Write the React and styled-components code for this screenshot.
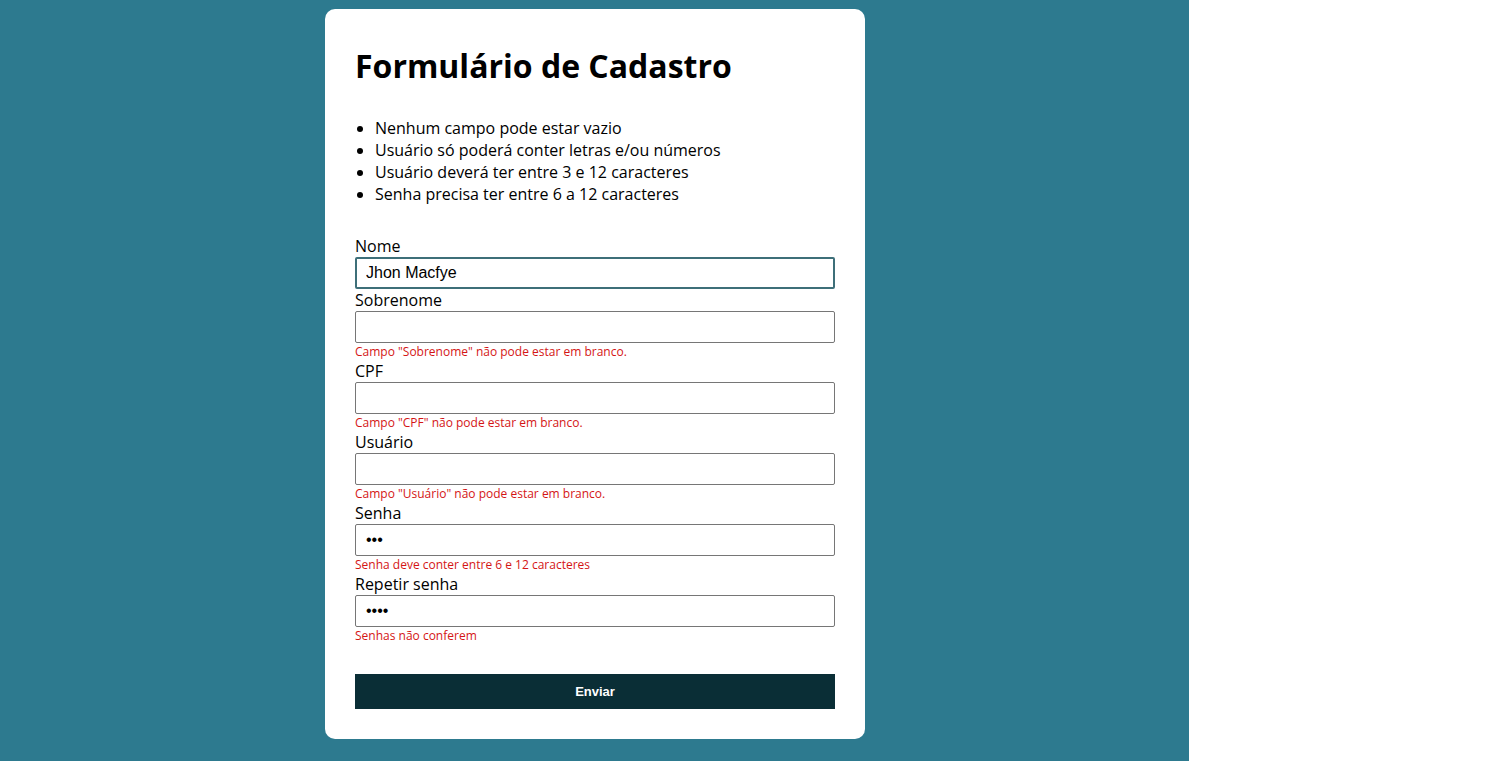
import { Fragment } from "react";
import styled, { createGlobalStyle } from "styled-components";

const GlobalStyle = createGlobalStyle`
  html, body {
    margin: 0;
    padding: 0;
    background: #ffffff;
  }
  * {
    box-sizing: border-box;
  }
`;

const Page = styled.div`
  width: 1189px;
  min-height: 761px;
  background-color: #2d7a8f;
  padding-top: 9px;
  padding-left: 325px;
  font-family: "Open Sans", "Liberation Sans", sans-serif;
`;

const Card = styled.div`
  width: 540px;
  background: #ffffff;
  border-radius: 10px;
  padding: 30px;
`;

const Title = styled.h1`
  font-size: 32px;
  font-weight: 700;
  color: #000;
  margin: 5px 0 0;
  line-height: 44px;
`;

const Rules = styled.ul`
  margin: 29px 0 0;
  padding-left: 20px;
  font-size: 16px;
  line-height: 22px;
  color: #000;
`;

const Form = styled.form`
  display: flex;
  flex-direction: column;
  margin-top: 30px;
`;

const Label = styled.label`
  font-size: 16px;
  line-height: 22px;
  color: #000;
`;

const Input = styled.input`
  width: 480px;
  height: 32px;
  padding: 0 10px;
  font-family: "Liberation Sans", Arial, sans-serif;
  font-size: 16px;
  color: #000;
  border: 1px solid #767676;
  border-radius: 2px;
  background: #fff;
  outline: none;
  caret-color: #000;

  &:focus {
    border: 2px solid #3e6f79;
    padding: 0 9px;
  }
`;

const ErrorText = styled.span`
  font-size: 12px;
  line-height: 16px;
  color: #d41515;
  margin-top: 1px;
`;

const Submit = styled.button`
  margin-top: 30px;
  width: 480px;
  height: 35px;
  border: none;
  background: #0a2e36;
  color: #ffffff;
  font-family: "Liberation Sans", Arial, sans-serif;
  font-weight: 700;
  font-size: 13px;
  cursor: pointer;
`;

const fields = [
  { label: "Nome", value: "Jhon Macfye", focus: true },
  { label: "Sobrenome", error: 'Campo "Sobrenome" não pode estar em branco.' },
  { label: "CPF", error: 'Campo "CPF" não pode estar em branco.' },
  { label: "Usuário", error: 'Campo "Usuário" não pode estar em branco.' },
  { label: "Senha", type: "password", value: "abc", error: "Senha deve conter entre 6 e 12 caracteres" },
  { label: "Repetir senha", type: "password", value: "abcd", error: "Senhas não conferem" },
];

export default function App() {
  return (
    <>
      <GlobalStyle />
      <Page>
        <Card>
          <Title>Formulário de Cadastro</Title>
          <Rules>
            <li>Nenhum campo pode estar vazio</li>
            <li>Usuário só poderá conter letras e/ou números</li>
            <li>Usuário deverá ter entre 3 e 12 caracteres</li>
            <li>Senha precisa ter entre 6 a 12 caracteres</li>
          </Rules>
          <Form onSubmit={(e) => e.preventDefault()}>
            {fields.map((f) => (
              <Fragment key={f.label}>
                <Label>{f.label}</Label>
                <Input
                  type={f.type || "text"}
                  defaultValue={f.value || ""}
                  autoFocus={f.focus}
                />
                {f.error && <ErrorText>{f.error}</ErrorText>}
              </Fragment>
            ))}
            <Submit type="submit">Enviar</Submit>
          </Form>
        </Card>
      </Page>
    </>
  );
}
